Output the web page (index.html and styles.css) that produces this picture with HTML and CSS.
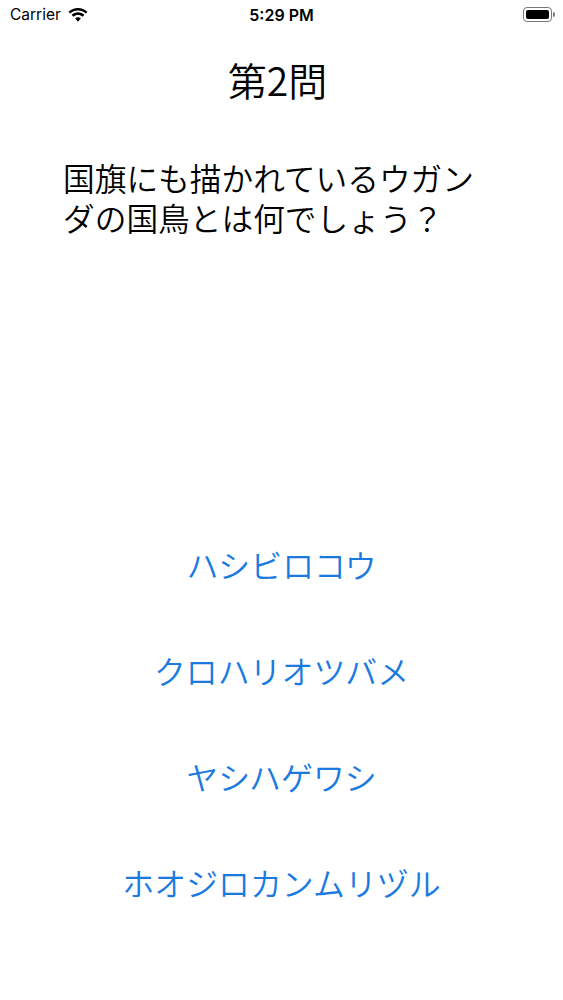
FILE: index.html
```html
<!DOCTYPE html>
<html lang="ja">
<head>
    <meta charset="UTF-8">
    <meta name="viewport" content="width=device-width, initial-scale=1.0">
    <title>Quiz</title>
    <link rel="stylesheet" href="styles.css">
</head>
<body>

    <div class="status-bar">
        <div class="status-left">
            <span>Carrier</span>
            <svg class="wifi-icon" width="20" height="14" viewBox="0 0 20 14">
                <path d="M10 2.600c3 0 5.700 1.100 7.800 3l1.700-1.900C17 1.400 13.700 0 10 0S3 1.400.5 3.700l1.700 1.900c2.100-1.900 4.800-3 7.800-3z" fill="#000"/>
                <path d="M10 7c1.800 0 3.400.7 4.600 1.700l1.800-2C14.700 5.200 12.500 4.300 10 4.300s-4.700.9-6.400 2.400l1.800 2C6.600 7.700 8.200 7 10 7z" fill="#000"/>
                <path d="M10 9.200c-1.100 0-2.100.4-2.900 1.100l2.900 3.400 2.900-3.400c-.8-.7-1.800-1.100-2.900-1.100z" fill="#000"/>
            </svg>
        </div>
        <div class="status-time">5:29 PM</div>
        <div class="status-right">
            <div class="battery">
                <div class="battery-level"></div>
            </div>
            <div class="battery-cap"></div>
        </div>
    </div>

    <h1 class="question-no">第2問</h1>

    <p class="question-text">国旗にも描かれているウガンダの国鳥とは何でしょう？</p>

    <div class="answers">
        <button class="answer-btn">ハシビロコウ</button>
        <button class="answer-btn">クロハリオツバメ</button>
        <button class="answer-btn">ヤシハゲワシ</button>
        <button class="answer-btn">ホオジロカンムリヅル</button>
    </div>

</body>
</html>
```

FILE: styles.css
```css
html, body {
    height: 100%;
}

body {
    background-color: #FFFFFF;
    margin: 0;
    font-family: 'Noto Sans CJK JP', 'Liberation Sans', sans-serif;
    font-weight: 350;
    color: #000000;
    display: flex;
    flex-direction: column;
}

.status-bar {
    display: grid;
    grid-template-columns: 1fr auto 1fr;
    align-items: center;
    height: 29px;
    padding: 0 8px 0 10px;
    font-family: 'Inter', 'Liberation Sans', sans-serif;
    font-size: 15.5px;
    font-weight: normal;
}

.status-left {
    display: flex;
    align-items: center;
    gap: 7px;
}

.status-time {
    font-size: 16px;
    font-weight: 600;
    margin-right: 2px;
}

.status-right {
    display: flex;
    align-items: center;
    justify-content: flex-end;
}

.battery {
    width: 29px;
    height: 15px;
    box-sizing: border-box;
    padding: 2px;
    border: 1px solid #777777;
    border-radius: 4px;
}

.battery-level {
    height: 100%;
    background-color: #000000;
    border-radius: 2px;
}

.battery-cap {
    width: 2px;
    height: 5px;
    margin-left: 1px;
    background-color: #777777;
    border-radius: 0 2px 2px 0;
}

.question-no {
    margin: 22px 8px 0 0;
    font-size: 39px;
    font-weight: 350;
    line-height: 56px;
    text-align: center;
}

.question-text {
    width: 420px;
    margin: 50px 0 0 63px;
    font-size: 31.7px;
    line-height: 40px;
}

.answers {
    display: flex;
    flex-direction: column;
    align-items: center;
    margin-top: 274px;
}

.answer-btn {
    height: 106px;
    padding: 0;
    border: none;
    background: none;
    color: #1A7ADF;
    font-family: inherit;
    font-size: 31.9px;
    font-weight: 350;
    cursor: pointer;
}
```
